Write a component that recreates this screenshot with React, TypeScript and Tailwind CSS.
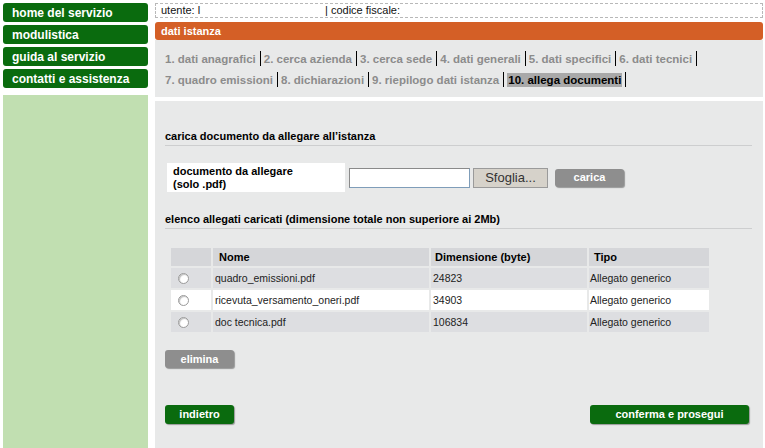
import React from "react";

const menu = ["home del servizio", "modulistica", "guida al servizio", "contatti e assistenza"];

const stepRows: string[][] = [
  ["1. dati anagrafici", "2. cerca azienda", "3. cerca sede", "4. dati generali", "5. dati specifici", "6. dati tecnici"],
  ["7. quadro emissioni", "8. dichiarazioni", "9. riepilogo dati istanza", "10. allega documenti"],
];

const files = [
  { name: "quadro_emissioni.pdf", size: "24823", type: "Allegato generico", bg: "bg-[#dddee1]" },
  { name: "ricevuta_versamento_oneri.pdf", size: "34903", type: "Allegato generico", bg: "bg-white" },
  { name: "doc tecnica.pdf", size: "106834", type: "Allegato generico", bg: "bg-[#dddee1]" },
];

const Radio = () => (
  <span className="inline-block h-[11px] w-[11px] rounded-full border border-[#9a9a9a] bg-white shadow-[inset_1px_1px_1px_rgba(0,0,0,0.25)]" />
);

const SectionTitle: React.FC<{ children: React.ReactNode }> = ({ children }) => (
  <div className="mr-[11px] border-b border-[#cdcecf] pb-[2px] text-[11px] font-bold leading-[14px] text-black">
    {children}
  </div>
);

export default function App() {
  return (
    <div className="flex h-[448px] w-[765px] overflow-hidden bg-white font-['Liberation_Sans',Arial,sans-serif]">
      {/* sidebar */}
      <aside className="flex w-[155px] flex-col pl-[3px] pr-[7px] pt-[3px]">
        <div className="flex flex-col gap-[3px]">
          {menu.map((m) => (
            <div
              key={m}
              className="flex h-[19px] items-center rounded-[3px] bg-[#0a6b0e] pl-[9px] text-[12px] font-bold text-white"
            >
              {m}
            </div>
          ))}
        </div>
        <div className="mt-[7px] flex-1 bg-[#c1dfb1]" />
      </aside>

      {/* content */}
      <main className="flex w-[608px] flex-col pt-[3px]">
        <div className="flex h-[15px] items-center border border-dashed border-[#b8b8b8] bg-white pl-[5px] text-[11px] text-[#111]">
          <span className="w-[164px]">utente: l</span>
          <span>| codice fiscale:</span>
        </div>
        <div className="mt-[4px] flex h-[18px] items-center rounded-[3px] bg-[#d45f26] pl-[6px] text-[11px] font-bold text-white">
          dati istanza
        </div>
        <div className="flex h-[57px] flex-col gap-[6px] bg-[#e8e9e9] pl-[10px] pt-[11px]">
          {stepRows.map((row, i) => (
            <div key={i} className="flex items-center text-[11.5px] font-bold leading-[14px] text-[#8c8c8c]">
              {row.map((s) => {
                const active = s.startsWith("10.");
                return (
                  <React.Fragment key={s}>
                    <span className={active ? "bg-[#a9a9a9] px-[1px] text-black" : "pr-[1px]"}>{s}</span>
                    <span className="mx-[3px] inline-block h-[15px] w-px bg-black" />
                  </React.Fragment>
                );
              })}
            </div>
          ))}
        </div>

        <div className="mt-[4px] flex flex-1 flex-col bg-[#e8e9e9] pl-[10px] pt-[28px]">
          <SectionTitle>carica documento da allegare all&rsquo;istanza</SectionTitle>

          <div className="mt-[17px] flex items-center">
            <div className="ml-[2px] flex h-[29px] w-[178px] flex-col justify-center bg-white pl-[6px] text-[11px] font-bold leading-[13px] text-black">
              <span>documento da allegare</span>
              <span>(solo .pdf)</span>
            </div>
            <div className="ml-[4px] h-[20px] w-[121px] border border-[#7f9db9] border-t-[#8a8a8a] border-l-[#8a8a8a] bg-white" />
            <div className="ml-[3px] flex h-[20px] w-[75px] items-center justify-center border border-[#9a9a9a] bg-[#d6d2ca] text-[13px] text-[#333]">
              Sfoglia...
            </div>
            <div className="ml-[7px] flex h-[18px] w-[69px] items-center justify-center rounded-[3px] bg-[#8e8e8e] text-[11px] font-bold text-white shadow-[1px_1px_1px_rgba(0,0,0,0.35)]">
              carica
            </div>
          </div>

          <div className="mt-[20px]">
            <SectionTitle>elenco allegati caricati (dimensione totale non superiore ai 2Mb)</SectionTitle>
          </div>

          <div className="ml-[6px] mt-[19px] grid w-[538px] grid-cols-[40px_216px_156px_120px] gap-[2px] text-[10.5px] leading-[14px]">
            <div className="h-[18px] bg-[#d5d6d9]" />
            <div className="flex h-[18px] items-center bg-[#d5d6d9] pl-[6px] text-[11px] font-bold text-black">Nome</div>
            <div className="flex h-[18px] items-center bg-[#d5d6d9] pl-[4px] text-[11px] font-bold text-black">Dimensione (byte)</div>
            <div className="flex h-[18px] items-center bg-[#d5d6d9] pl-[5px] text-[11px] font-bold text-black">Tipo</div>
            {files.map((f) => (
              <React.Fragment key={f.name}>
                <div className={`flex h-[20px] items-center pl-[7px] ${f.bg}`}>
                  <Radio />
                </div>
                <div className={`flex h-[20px] items-center pl-[2px] text-[#222] ${f.bg}`}>{f.name}</div>
                <div className={`flex h-[20px] items-center pl-[2px] text-[#222] ${f.bg}`}>{f.size}</div>
                <div className={`flex h-[20px] items-center pl-[1px] text-[#222] ${f.bg}`}>{f.type}</div>
              </React.Fragment>
            ))}
          </div>

          <div className="mt-[18px] flex h-[18px] w-[69px] items-center justify-center rounded-[3px] bg-[#8e8e8e] text-[11px] font-bold text-white shadow-[1px_1px_1px_rgba(0,0,0,0.35)]">
            elimina
          </div>

          <div className="mr-[14px] mt-[37px] flex justify-between">
            <div className="flex h-[19px] w-[69px] items-center justify-center rounded-[3px] bg-[#0a6b0e] text-[11px] font-bold text-white shadow-[1px_1px_1px_rgba(0,0,0,0.35)]">
              indietro
            </div>
            <div className="flex h-[19px] w-[159px] items-center justify-center rounded-[3px] bg-[#0a6b0e] text-[11px] font-bold text-white shadow-[1px_1px_1px_rgba(0,0,0,0.35)]">
              conferma e prosegui
            </div>
          </div>
        </div>
      </main>
    </div>
  );
}
